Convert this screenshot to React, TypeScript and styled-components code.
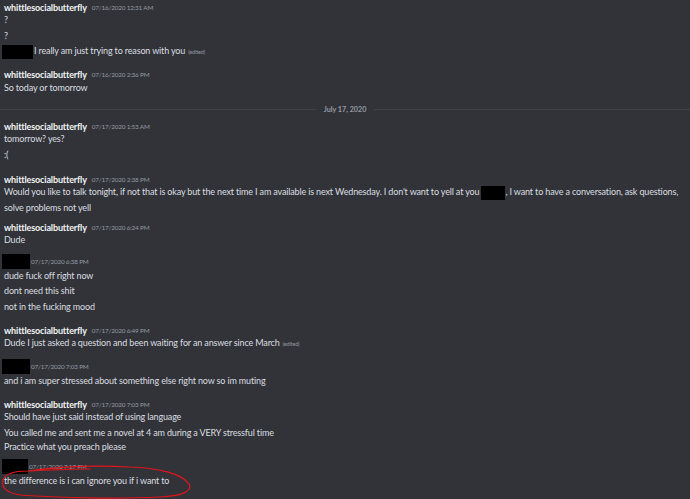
import React from 'react';
import styled, { createGlobalStyle } from 'styled-components';

const GlobalStyle = createGlobalStyle`
  html, body {
    margin: 0;
    padding: 0;
    background: #313338;
  }
  body {
    font-family: Lato, "Noto Sans", sans-serif;
    overflow: hidden;
  }
`;

const Chat = styled.div`
  position: relative;
  width: 690px;
  height: 499px;
  overflow: hidden;
  background: #313338;
  padding-left: 4px;
  box-sizing: border-box;
`;

const Group = styled.div<{ $gap: number }>`
  margin-top: ${p => p.$gap}px;
`;

const Header = styled.div<{ $boxed?: boolean }>`
  display: flex;
  align-items: center;
  height: ${p => (p.$boxed ? 12 : 10)}px;
  white-space: nowrap;
`;

const Author = styled.span`
  font-size: 9px;
  font-weight: 700;
  letter-spacing: -0.15px;
  color: #f2f3f5;
  margin-right: 5px;
`;

const Stamp = styled.span`
  font-size: 6.4px;
  letter-spacing: -0.2px;
  color: #949ba4;
`;

const Line = styled.div<{ $lh?: number }>`
  font-size: 9px;
  letter-spacing: -0.15px;
  line-height: ${p => p.$lh ?? 15.5}px;
  color: #dbdee1;
  white-space: nowrap;
`;

const Redacted = styled.span<{ $w: number; $h?: number }>`
  display: inline-block;
  width: ${p => p.$w}px;
  height: ${p => p.$h ?? 14}px;
  background: #000;
  vertical-align: middle;
`;

const HeaderBox = styled(Redacted)`
  margin-left: -2px;
  margin-right: 1px;
`;

const Edited = styled.span`
  font-size: 5.5px;
  color: #949ba4;
  margin-left: 3px;
`;

const Divider = styled.div`
  display: flex;
  align-items: center;
  gap: 8px;
  height: 25px;
  padding-top: 3px;
  box-sizing: border-box;
  margin-left: -4px;
  &::before,
  &::after {
    content: '';
    flex: 1;
    height: 1px;
    background: #3f4147;
  }
`;

const DividerText = styled.span`
  font-size: 7.2px;
  font-weight: 700;
  color: #949ba4;
`;

const Scribble = styled.svg`
  position: absolute;
  left: 0;
  top: 455px;
  pointer-events: none;
`;

const NAME = 'whittlesocialbutterfly';

export default function App() {
  return (
    <>
      <GlobalStyle />
      <Chat>
        <Group $gap={2}>
          <Header>
            <Author>{NAME}</Author>
            <Stamp>07/16/2020 12:31 AM</Stamp>
          </Header>
          <Line>?</Line>
          <Line>?</Line>
          <Line>
            <HeaderBox $w={31} />I really am just trying to reason with you
            <Edited>(edited)</Edited>
          </Line>
        </Group>

        <Group $gap={9}>
          <Header>
            <Author>{NAME}</Author>
            <Stamp>07/16/2020 2:36 PM</Stamp>
          </Header>
          <Line>So today or tomorrow</Line>
        </Group>

        <Divider>
          <DividerText>July 17, 2020</DividerText>
        </Divider>

        <Group $gap={1}>
          <Header>
            <Author>{NAME}</Author>
            <Stamp>07/17/2020 1:53 AM</Stamp>
          </Header>
          <Line>tomorrow? yes?</Line>
          <Line>:(</Line>
        </Group>

        <Group $gap={12}>
          <Header>
            <Author>{NAME}</Author>
            <Stamp>07/17/2020 2:38 PM</Stamp>
          </Header>
          <Line>
            Would you like to talk tonight, if not that is okay but the next time I am available is next Wednesday. I
            don't want to yell at you <Redacted $w={24} />, I want to have a conversation, ask questions,
          </Line>
          <Line>solve problems not yell</Line>
        </Group>

        <Group $gap={7}>
          <Header>
            <Author>{NAME}</Author>
            <Stamp>07/17/2020 6:24 PM</Stamp>
          </Header>
          <Line>Dude</Line>
        </Group>

        <Group $gap={8}>
          <Header $boxed>
            <HeaderBox $w={28} $h={15} />
            <Stamp>07/17/2020 6:38 PM</Stamp>
          </Header>
          <Line>dude fuck off right now</Line>
          <Line>dont need this shit</Line>
          <Line>not in the fucking mood</Line>
        </Group>

        <Group $gap={11}>
          <Header>
            <Author>{NAME}</Author>
            <Stamp>07/17/2020 6:49 PM</Stamp>
          </Header>
          <Line>
            Dude I just asked a question and been waiting for an answer since March
            <Edited>(edited)</Edited>
          </Line>
        </Group>

        <Group $gap={8}>
          <Header $boxed>
            <HeaderBox $w={28} $h={15} />
            <Stamp>07/17/2020 7:03 PM</Stamp>
          </Header>
          <Line>and i am super stressed about something else right now so im muting</Line>
        </Group>

        <Group $gap={11}>
          <Header>
            <Author>{NAME}</Author>
            <Stamp>07/17/2020 7:03 PM</Stamp>
          </Header>
          <Line>Should have just said instead of using language</Line>
          <Line $lh={15}>You called me and sent me a novel at 4 am during a VERY stressful time</Line>
          <Line $lh={14}>Practice what you preach please</Line>
        </Group>

        <Group $gap={7}>
          <Header $boxed>
            <HeaderBox $w={26} $h={15} />
            <Stamp>07/17/2020 7:17 PM</Stamp>
          </Header>
          <Line>the difference is i can ignore you if i want to</Line>
        </Group>

        <Scribble width="200" height="44" viewBox="0 455 200 44">
          <path
            d="M28 471 C55 467 95 465 130 467 C160 468 182 474 189 484 C193 492 180 496 160 497 C120 499 60 498 20 495 C6 493 1 487 3 480 C5 474 14 471 28 471 C50 470 70 469 90 469"
            fill="none"
            stroke="#e3141a"
            strokeWidth="1.2"
            strokeLinecap="round"
          />
        </Scribble>
      </Chat>
    </>
  );
}
